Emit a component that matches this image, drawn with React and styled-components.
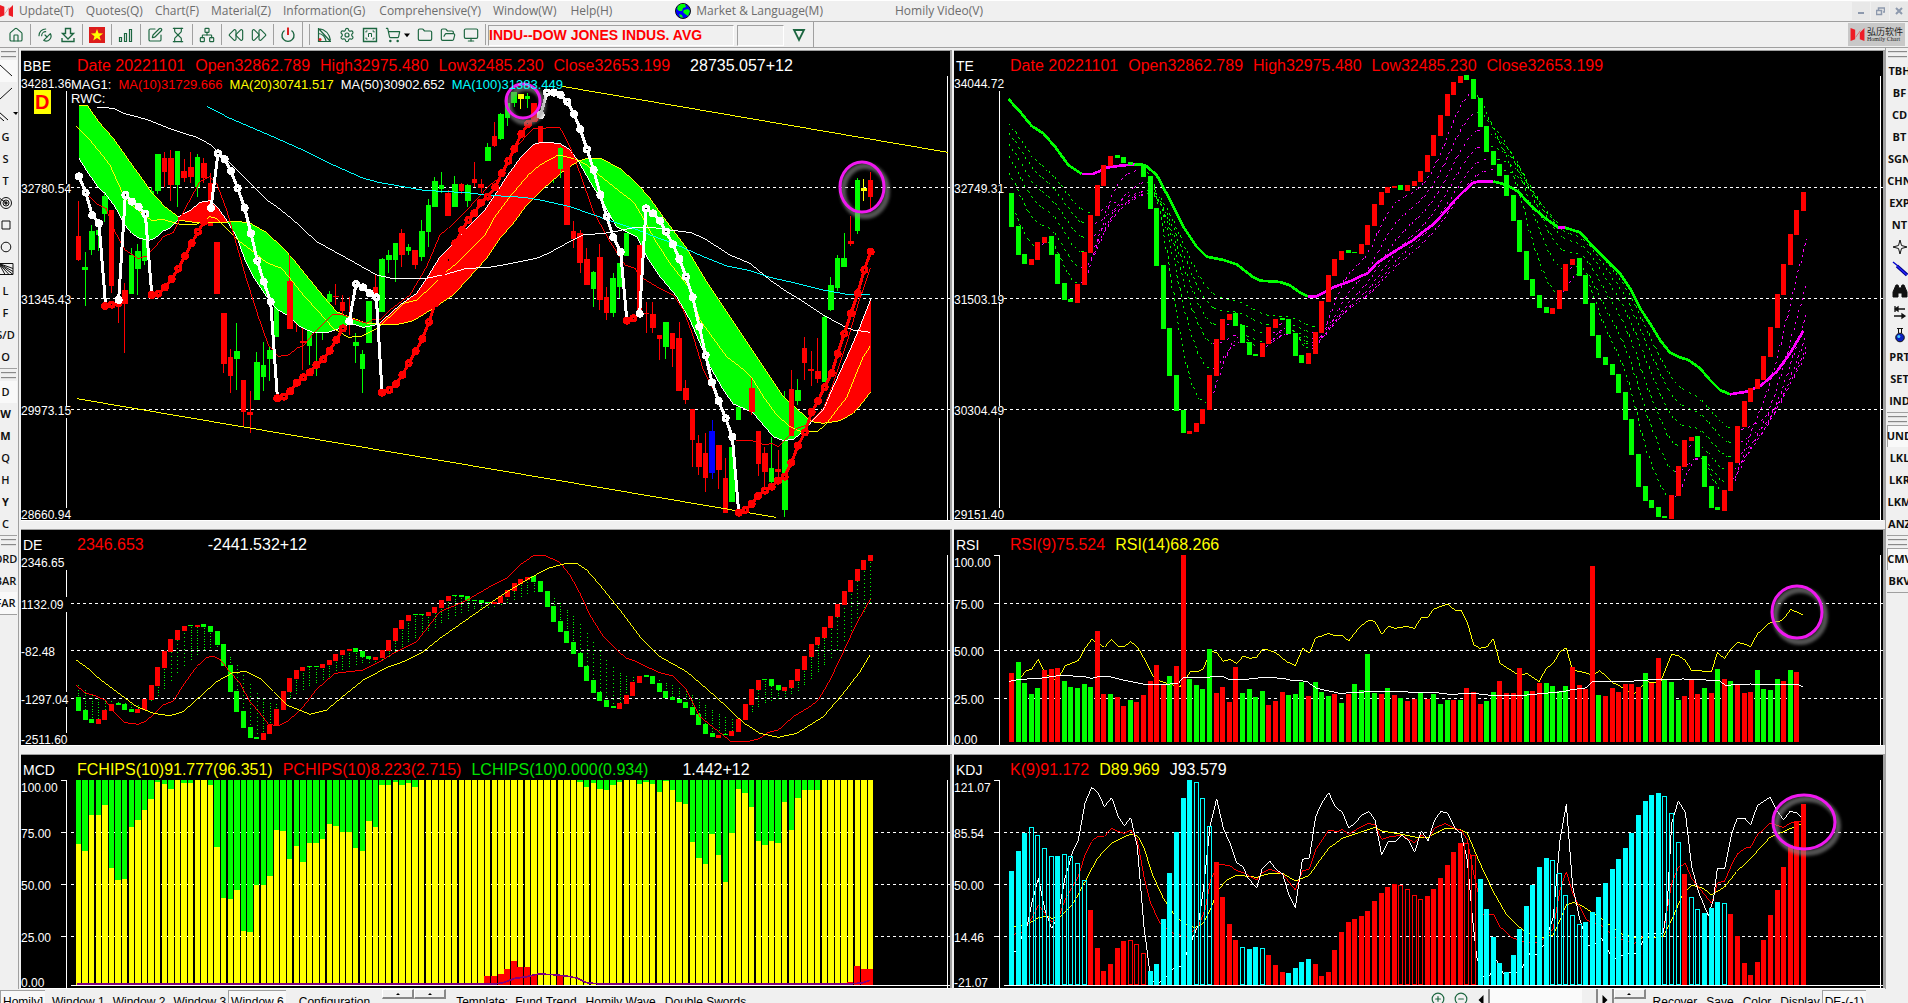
import React from "react";
import styled, { createGlobalStyle, css } from "styled-components";
import {
  House, SatelliteDish, SquarePen, Hourglass, Network, Rewind, FastForward,
  Settings, ShoppingCart, Folder, FolderOpen, Monitor, CirclePlus, CircleMinus,
} from "lucide-react";

/* ---------- palette ---------- */
const RED = "#ff0000";
const GREEN = "#00ff00";
const YELLOW = "#ffff00";
const CYAN = "#00ffff";
const WHITE = "#ffffff";
const MAGENTA = "#ff00ff";
const BLUE = "#0000ff";
const PURPLE = "#800080";
const FACE = "#f0f0f0";
const SHADE = "#a0a0a0";
const ICON = "#1c6640";

/* ---------- series ---------- */
const PITCH = 19.8;
const BODY = 15;
const LEFT_START = 235.5;
const RIGHT_START = 214.5;

const nums = (s) => s.trim().split(/\s+/).map(Number);
const tags = (s) => s.trim().split(/\s+/).map((t) => [t[0], Number(t.slice(1))]);
const join = (a, b, dx) =>
  a.trim() + " " + b.trim().split(/\s+/).map((p) => {
    const [x, y] = p.split(",");
    return `${Number(x) + dx},${y}`;
  }).join(" ");
const L = (a, b) => join(a, b, 1410);
const R = (a, b) => join(a, b, 1470);

// colour, bar index, high, body top, body bottom, low
const candles = `
R 0 452 558 629 632|G 1 606 651 659 768|G 2 525 543 600 615|G 3 540 540 556 603|G 4 430 438 491 515
R 5 480 480 708 728|R 6 746 752 762 820|R 7 698 720 762 908|G 8 595 615 731 731|G 9 583 602 657 735
G 10 555 560 632 645|G 11 410 424 470 480|G 12 312 312 423 432|R 13 305 324 366 412|R 14 300 324 405 452
G 15 303 303 405 470|R 16 328 363 384 395|R 17 306 351 381 398|G 18 312 321 411 440|R 19 324 339 384 400
R 20 370 399 528 528|R 21 576 576 732 732|R 22 789 789 941 970|R 23 898 921 978 1028|G 24 819 903 927 1020
R 25 990 990 1086 1128|R 26 1023 1086 1095 1150|G 27 906 936 1049 1049|G 28 876 945 980 1022|G 29 891 900 927 993
G 30 770 770 860 860|R 31 681 696 720 738|R 32 615 694 837 837|R 33 785 808 820 845|R 34 828 873 879 960
G 35 838 838 888 945|G 36 800 830 835 978|G 37 840 845 848 870|G 38 723 732 756 762|R 39 702 738 742 765
R 40 735 756 782 808|R 41 741 800 815 856|G 42 850 876 888 938|G 43 900 912 957 1028|G 44 752 752 879 879
R 45 672 711 745 760|G 46 624 627 786 786|G 47 600 615 629 668|G 48 578 579 629 695|R 49 537 549 615 651
G 50 582 591 602 614|R 51 600 600 645 657|G 52 510 543 621 633|G 53 447 465 546 590|G 54 381 393 471 471
G 55 366 405 416 430|R 56 420 429 497 497|G 57 378 402 471 471|R 58 399 402 423 432|G 59 402 405 453 471
R 60 336 387 399 410|R 61 388 402 414 430|G 62 280 291 333 333|R 63 216 258 288 291|G 64 190 192 267 270
G 65 130 160 204 228|G 66 126 126 159 170|Y 67 132 132 148 177|G 68 130 138 147 175|R 69 159 159 215 215
R 70 228 228 280 280|G 72 339 366 384 398|G 73 290 294 357 384|R 74 348 348 525 525|R 75 513 543 567 593
R 76 540 549 639 669|R 77 594 627 705 705|G 78 663 666 717 770|R 79 582 621 750 780|R 80 711 741 789 809
G 81 670 684 789 801|G 82 640 640 711 745|G 83 550 550 618 618|R 85 585 585 790 800|R 86 756 790 793 849
R 87 756 792 834 849|R 88 855 855 867 930|G 89 816 816 891 927|R 90 850 850 897 950|R 91 816 864 1023 1023
R 92 990 1014 1050 1063|R 93 1078 1078 1170 1251|R 94 1155 1180 1251 1275|R 95 1149 1209 1284 1326|B 96 1110 1143 1270 1287
R 97 1185 1185 1260 1317|R 98 1224 1284 1389 1389|G 99 1191 1191 1356 1356|G 100 1070 1070 1110 1110|R 102 984 1014 1086 1095
R 103 1143 1143 1242 1278|R 104 1192 1209 1266 1330|G 105 1161 1254 1296 1300|R 106 1200 1256 1266 1300|G 107 1022 1170 1380 1401
R 108 960 1017 1158 1158|G 109 987 1020 1053 1065|R 110 861 894 939 990|R 111 903 958 962 1007|R 112 864 963 987 998
G 113 795 801 996 996|G 114 681 705 780 782|G 115 615 624 714 722|G 116 549 624 651 651|R 117 498 573 581 588
G 118 384 390 543 552|Y 119 387 414 423 453|R 120 366 390 441 480`
  .trim().split(/[|\n]/).map((row) => {
    const [c, ...v] = row.trim().split(" ");
    return [c, ...v.map(Number)];
  });
const candleColour = { R: RED, G: GREEN, Y: YELLOW, B: BLUE };

// each band: fill, edge nearer the fast line, edge nearer the slow line
const bands = [
  { fill: GREEN, slow: "237,168 263,168 300,220 340,265 400,350 440,405 455,428 495,470 535,500",
    fast: "237,325 265,370 297,415 315,430 345,470 375,525 395,550 415,563 445,572 465,565 490,543 510,535 535,510" },
  { fill: RED, slow: "535,510 590,518 640,518 685,516",
    fast: "535,500 570,482 600,457 630,452 655,475 685,518" },
  { fill: GREEN, slow: "685,516 720,515 755,522 800,548 850,595 880,628 930,690 975,745 1010,785 1045,800 1100,820 1140,822",
    fast: "685,520 710,560 735,630 760,680 800,740 830,778 870,800 900,830 940,848 980,848 1020,835 1050,820 1090,832 1140,822" },
  { fill: RED, slow: L("1140,825 1190,824 1240,812 1300,775 1360,735", "0,680 50,625 90,565 130,520 170,465 210,425 250,390 290,355 325,334"),
    fast: L("1140,818 1200,765 1250,730 1280,685 1320,620 1360,580", "0,525 45,480 75,435 110,380 150,325 190,283 215,277 270,280 300,300 325,334") },
  { fill: GREEN, slow: L("1735,334", "350,325 395,327 450,355 500,400 540,445 590,515 650,595 710,695 760,770 820,860 880,950 940,1040 990,1085 1025,1115"),
    fast: L("1735,334", "360,395 400,460 440,530 500,560 530,620 570,680 620,740 660,810 690,880 720,950 760,1020 790,1062 820,1075 850,1090 880,1125 910,1160 940,1172 970,1168 1000,1145 1025,1115") },
  { fill: RED, slow: L("2435,1115", "1060,1120 1110,1112 1150,1090 1180,1055 1202,1025"),
    fast: L("2435,1115", "1060,1080 1090,1010 1140,900 1170,830 1202,748") },
];

const maLines = [
  [YELLOW, L("229,229 270,270 310,320 330,345 350,390 375,445 400,470 440,500 455,511 490,509 540,523 590,523 630,500 650,505 690,545 720,575 760,605 800,638 845,655 870,685 910,735 960,790 1000,835 1045,862 1085,858 1130,836 1170,800 1210,760 1250,750 1300,705 1330,672 1370,640",
    "0,600 45,555 75,500 120,440 175,375 210,345 265,315 320,328 350,345 400,385 450,425 490,455 520,505 555,570 600,640 655,710 690,810 730,865 770,920 810,950 845,982 880,1040 920,1095 960,1130 1000,1148 1045,1143 1070,1120 1100,1080 1130,1043 1155,980 1180,920 1201,888")],
  [RED, L("255,425 290,462 318,475 345,545 375,600 415,626 440,618 470,585 490,560 520,548 540,505 575,440 600,395 630,380 650,400 680,480 700,550 740,690 775,800 805,885 835,919 865,915 895,892 910,888 940,850 1000,792 1030,795 1060,808 1100,820 1120,808 1140,810 1170,780 1230,735 1280,650 1320,555 1345,535 1380,500",
    "0,470 60,405 100,375 130,300 190,235 270,233 300,290 330,370 370,485 420,575 465,645 495,655 510,680 560,710 610,735 640,780 670,860 700,960 740,1040 775,1135 800,1172 850,1173 885,1185 905,1180 925,1190 980,1135 1010,1125 1060,1075 1090,1000 1130,880 1165,760 1201,655")],
  [WHITE, L("290,171 340,175 370,190 440,208 510,236 590,262 630,283 655,305 700,350 740,390 800,450 830,470 880,510 950,575 1050,630 1130,675 1180,686 1280,685 1340,672 1400,655",
    "50,653 100,645 200,625 235,610 290,580 340,555 420,548 490,533 550,533 600,540 665,548 710,570 780,615 840,640 900,690 950,725 1000,755 1060,795 1120,828 1150,840 1201,847")],
  [CYAN, L("620,169 690,205 760,235 830,265 920,305 1000,345 1090,385 1140,398 1210,410 1270,421 1400,428",
    "60,436 160,442 210,450 300,470 400,505 490,535 540,555 610,580 700,620 770,648 840,662 900,682 980,700 1060,720 1130,733 1201,734")],
];

const waves = [
  [RED, "315,768 335,764 355,760"],
  [WHITE, "237,379 257,428 277,496 297,520 316,755"],
  [WHITE, "356,750 376,435 396,455 416,470 436,492 455,730"],
  [RED, "455,735 475,731 495,712 515,687 535,656 555,618 575,580 594,545 612,515"],
  [WHITE, "633,474 654,310 674,328 693,363 713,415 734,474 753,550 772,632 791,695 812,755 832,1040"],
  [RED, "832,1045 852,1040 871,1024 891,998 910,982 930,967 949,945 970,928 989,902 1009,870 1029,835"],
  [WHITE, "1048,814 1068,702 1089,712 1109,730 1129,742 1146,1025"],
  [RED, L("1146,1028 1168,1020 1188,1002 1207,975 1226,940 1247,904 1267,867 1287,816 1306,760 1326,690 1346,630 1366,580 1386,540 1405,510",
    "13,490 33,458 53,440 76,412 95,370 115,333 133,297 154,252 174,222 194,205")],
  [WHITE, L("1622,195", "231,128 252,128 272,135 292,155 312,192 331,238 351,298 371,360 391,435 410,500 430,562 452,606 470,805")],
  [RED, "1880,812 1900,805"],
  [WHITE, L("1919,791", "528,475 549,490 570,512 588,545 609,583 628,627 648,680 668,742 688,830 707,916 726,997 746,1053 767,1105 787,1161 806,1385")],
  [RED, L("2216,1388", "826,1380 845,1362 864,1338 885,1322 905,1310 924,1292 944,1280 964,1238 984,1187 1005,1147 1025,1086 1044,1053 1064,1012 1085,970 1103,911 1123,851 1143,790 1163,730 1183,660 1202,605")],
];

const trend = nums(`432 530 615 642 627 576 561 615 702 750 756 702 606 495 405 345 318 324 339 346 347 381 476 647 836 978
1083 1148 1143 1119 1077 975 867 807 792 828 879 914 918 879 831 807 809 852 918 939 909 846 753 675 627 603 608 609 582 525 462
426 411 408 419 405 393 363 315 255 195 132 96 78 90 147 231 306 345 378 438 513 606 690 738 774 789 774 720 642 627 678 762
858 924 945 975 1029 1110 1215 1311 1353 1374 1401 1404 1335 1248 1170 1161 1221 1311 1374 1380 1320 1236 1128 1053 1014 987
918 831 732 642 552 480 426`);

const trendEdge = [
  [GREEN, "205,147 240,185 275,228 310,250 345,290 385,345 425,372"],
  [MAGENTA, "425,372 460,372 500,353 540,347 585,343"],
  [GREEN, "585,343 615,345 650,375 690,450 730,530 770,590 800,620 850,630 890,643 940,682 960,692 1020,696 1050,706 1080,728 1105,739"],
  [MAGENTA, "1105,739 1130,739 1185,710 1240,690 1285,668 1310,640 1365,603 1420,570 1450,545 1480,523 1520,480 1545,450 1570,425 1600,398 1620,394 1660,394"],
  [GREEN, "1660,394 1700,405 1735,425 1770,465 1810,500 1855,533"],
  [MAGENTA, "1855,533 1875,533"],
  [GREEN, "1875,533 1920,547 1960,590 2000,630 2040,670 2070,715 2100,775 2130,820 2160,870 2190,908 2220,922 2245,930 2280,955 2310,990 2340,1020 2370,1033"],
  [MAGENTA, "2370,1033 2420,1025 2465,1005 2510,965 2550,910 2590,843"],
];
// period, seed
const ribbons = [[5, 485], [9, 352], [13, 300], [17, 262], [21, 230], [25, 203]];

const diff = nums(`534 573 600 609 597 570 552 556 570 575 567 537 495 441 393 357 330 318 319 316 320 336 375 438 516 575 624
654 656 639 615 567 513 474 450 441 442 442 432 420 402 390 388 395 411 416 411 390 360 324 300 285 286 286 276 262 240 228
229 232 242 243 250 250 246 228 210 189 177 171 185 215 261 305 335 369 401 440 482 518 542 560 564 549 525 486 468 472 491
515 534 540 548 563 584 614 641 651 645 646 633 598 551 507 480 481 497 510 501 480 447 408 372 351 321 288 252 213 180 147
120 105`);
const diffLines = [
  [RED, L("229,496 255,518 285,527 315,540 345,580 375,608 415,613 440,602 490,555 520,543 550,495 590,440 620,413 640,408 660,418 685,450 720,490 750,545 780,580 805,612 835,618 865,603 910,560 950,508 1005,460 1090,450 1140,425 1180,400 1250,365 1320,275 1380,250",
    "0,235 60,200 110,175 150,135 190,107 225,106 270,128 300,165 330,220 360,285 400,350 440,390 470,415 500,425 540,445 570,458 610,468 650,510 690,590 740,630 785,666 830,666 870,655 895,637 925,630 970,590 1020,560 1045,540 1080,480 1125,385 1160,310 1201,238")],
  [YELLOW, L("229,420 270,450 300,478 350,515 410,560 460,580 510,587 550,575 600,530 650,485 700,457 740,455 780,475 820,515 860,555 930,583 980,570 1040,520 1090,480 1160,443 1210,425 1270,395 1320,355 1370,320",
    "0,292 60,250 120,210 170,180 215,155 240,143 290,130 320,130 350,150 390,195 450,270 510,350 570,410 650,455 720,515 770,560 820,608 870,640 925,652 980,640 1060,590 1120,520 1170,455 1201,404")],
];

const chips = nums(`972 993 885 885 855 1043 1080 1077 921 900 870 837 786 792 807 780 789 789 780 780 795 981 1134 1137 1109
1233 1236 1095 1095 1068 930 933 1017 978 1026 969 969 957 912 918 936 936 984 993 903 921 795 795 786 795 789 801
780 780 780 780 780 780 780 780 780 780 780 780 780 780 780 780 780 780 780 780 780 780 780 780
786 801 789 807 810 795 786 780 780 792 786 792 816 783 810 846 852 966 1014 1032 941 1005 1086 939 807 819 861 963 975
963 969 846 930 834 810 810 810 780 780 780 780 780 780 780 780`);
const pressure = [[62, 1368], [63, 1368], [64, 1362], [65, 1347], [66, 1323], [67, 1341], [68, 1341], [69, 1365], [73, 1368], [117, 1386], [118, 1338], [119, 1347], [120, 1347]];
const pressureLine = "231,1393 1480,1393 1510,1388 1545,1375 1580,1370 1615,1362 1660,1364 1700,1368 1730,1374 1760,1388 1800,1392 2540,1393 2590,1388 2611,1381";

const volume = tags(`R459 G426 G489 G522 G504 R450 R447 R444 G483 G501 G504 G492 G501 R333 R522 G522 R531 R558 G540 R546 R525
R483 R435 R492 G468 R438 R105 G477 G495 G507 G387 R519 R501 R546 R441 G519 G507 G531 G513 R555 R543 R516 G525 G522 G486 R528
G486 G516 G528 R522 G549 R522 G492 G510 G402 G519 R522 G504 R525 G534 R543 R537 G516 R537 G522 G552 G540 R540 G540 R504 R516
R552 G543 G516 R483 R519 R519 R444 G513 R513 R489 G489 G498 G513 G498 R441 R495 R507 R138 G525 R528 R504 R516 R492 R492 R501
G459 R489 R414 G480 G486 G540 R528 R477 R522 G504 R519 G447 R477 G483 R495 R519 R516 G450 G507 G510 G477 R483 G450 R456`);
const rsiSlow = R("245,470 258,452 275,448 295,418 315,460 345,480 362,462 375,438 415,422 435,385 455,358 475,370 493,382 515,358 535,380 552,380 572,365 592,380 612,415 630,450 645,478 680,490 720,500 735,480 752,454 770,456 790,446 805,410 815,393 832,400 850,424 870,418 890,430 910,408 930,415 950,411 968,388 990,391 1010,400 1040,425 1066,437 1088,385 1108,400 1127,353 1145,348 1166,340 1187,348 1207,346 1226,363 1260,320 1287,300 1305,305 1325,343 1345,319 1365,325 1400,319 1424,325 1444,292 1464,292",
  "10,268 52,252 75,270 93,271 112,308 131,374 150,385 172,380 190,356 210,430 245,452 270,468 290,460 328,485 348,446 370,430 390,395 409,383 427,450 455,456 490,465 510,452 548,488 570,498 610,525 650,485 690,490 725,403 745,407 765,420 785,452 845,454 862,398 884,416 902,387 922,367 945,373 962,380 982,342 1020,308 1045,305 1060,298 1082,268 1118,284");
const volumeAverage = R("208,484 240,478 300,475 360,466 435,470 455,475 475,470 510,470 550,480 625,495 690,492 715,490 730,473 800,473 820,469 850,470 870,480 920,478 970,472 1030,475 1050,480 1100,484 1130,505 1200,520 1290,515 1400,516",
  "10,517 60,523 130,520 200,528 260,528 310,523 400,515 430,508 465,505 487,486 600,484 680,478 760,477 870,482 885,496 960,492 1105,494 1118,500");

// upper case: filled bar, lower case: outlined bar
const momentum = tags(`C1053 C993 C939 c921 c945 c984 c1008 C1008 c1002 c1008 c1029 c1080 R1170 R1284 R1353 R1332 R1284 R1263
r1260 r1272 r1299 C1353 C1332 C1197 C1059 C936 C834 C780 c786 c834 c918 R1026 R1131 R1212 R1260 c1281 C1287 C1281 c1284 R1305
R1335 R1356 C1359 C1344 C1326 C1317 R1332 R1368 R1356 R1290 R1236 R1206 R1197 R1188 R1173 R1143 R1119 R1101 R1092 r1095 r1107
r1125 r1137 R1128 R1107 R1074 R1035 R996 R969 r969 r1005 C1077 C1167 C1251 C1329 C1356 C1305 C1227 C1158 C1095 C1041 C1014
c1020 c1059 c1125 c1185 c1212 C1206 C1176 C1131 C1089 C1047 C1017 C984 C939 C885 C843 C825 C819 c828 c879 c966 R1062 c1131
c1167 C1179 C1164 C1146 c1149 R1182 R1248 R1329 R1365 R1326 R1260 R1185 R1110 R1041 R975 R903 R852`);
const kdjLines = [
  [YELLOW, R("222,1219 260,1215 295,1193 320,1188 335,1195 360,1190 400,1150 435,1085 472,1015 515,970 553,950 575,942 595,950 612,985 640,1070 670,1135 700,1180 730,1210 765,1223 790,1210 812,1165 835,1110 860,1080 890,1065 950,1072 990,1060 1028,1060 1066,1083 1108,1066 1140,1020 1166,985 1207,955 1260,937 1305,922 1325,933 1385,943 1424,951 1464,953",
    "0,948 45,925 90,928 112,940 150,1030 190,1115 230,1185 280,1232 330,1255 370,1245 390,1200 409,1155 430,1147 460,1160 520,1200 570,1240 620,1255 700,1250 725,1200 755,1130 785,1095 820,1105 845,1125 885,1100 920,1055 962,1015 1020,952 1060,935 1118,910")],
  [RED, R("222,1243 250,1235 275,1195 295,1155 315,1180 335,1205 355,1195 375,1140 415,1070 435,1005 455,965 472,949 493,949 515,925 535,935 553,940 572,930 592,960 612,1070 632,1150 660,1210 700,1240 740,1250 775,1220 795,1170 812,1080 835,1032 870,1037 890,1052 910,1058 950,1080 967,1058 990,1048 1028,1062 1066,1110 1087,1053 1108,1048 1127,990 1166,930 1190,935 1207,929 1226,943 1260,922 1287,910 1305,915 1325,958 1350,950 1385,946 1424,968 1444,945 1464,958",
    "14,925 45,910 75,925 95,932 112,960 131,1060 160,1185 190,1182 210,1220 245,1252 280,1265 330,1268 370,1225 390,1110 409,1055 430,1125 470,1200 520,1220 560,1255 615,1270 650,1240 700,1240 725,1090 745,1043 766,1030 785,1075 845,1150 862,1090 884,1083 905,1035 922,1002 945,985 962,981 982,945 1020,910 1060,922 1085,908 1118,905")],
  [WHITE, R("222,1296 232,1290 245,1250 262,1215 275,1150 295,1075 315,1170 335,1225 352,1195 375,1075 400,990 415,960 435,850 455,802 475,820 493,860 515,833 535,890 553,917 572,893 592,980 612,1220 632,1375 650,1395 680,1370 700,1345 722,1340 740,1300 760,1250 775,1215 790,1110 810,920 830,836 850,925 870,970 890,1028 908,1040 925,1075 950,1104 967,1045 990,1024 1010,1050 1028,1062 1045,1120 1066,1164 1087,1018 1108,1014 1127,890 1145,850 1166,818 1187,862 1207,876 1226,924 1245,910 1265,885 1287,875 1305,900 1325,1005 1345,964 1365,966 1385,946 1405,960 1424,997 1444,932 1464,963",
    "14,900 33,874 53,880 75,925 93,940 112,1020 128,1200 140,1310 160,1370 180,1365 200,1320 220,1360 270,1355 300,1300 320,1303 345,1270 370,1190 390,960 409,853 428,1100 450,1200 475,1278 500,1270 515,1255 550,1320 590,1300 620,1300 650,1240 700,1240 712,1150 725,910 745,842 766,878 785,1040 805,1115 835,1187 850,1140 862,1046 884,1045 905,940 922,895 945,895 962,915 982,857 1020,832 1040,870 1060,900 1080,874 1100,878 1118,895")],
];

/* ---------- chart primitives ---------- */
function ema(values, period, seed) {
  const k = 2 / (period + 1);
  let last = seed;
  return values.map((v) => (last += (v - last) * k));
}

const Line = ({ points, colour, width = 3, dash }) => (
  <polyline points={points} fill="none" stroke={colour} strokeWidth={width} strokeDasharray={dash} />
);

const Steps = ({ values, start }) =>
  values.slice(1).map((v, i) => {
    const prev = values[i];
    const up = v < prev;
    const top = Math.min(v, prev) - (up ? 0 : 3);
    return (
      <rect key={i} x={start + i * PITCH - 7.5} y={top} width={BODY}
        height={Math.abs(v - prev) + 3} fill={up ? RED : GREEN} />
    );
  });

function Plot({ x, y, children }) {
  return (
    <g transform={`translate(${x} ${y}) scale(0.333333)`} shapeRendering="crispEdges">
      {children}
    </g>
  );
}

function Scale({ labels, grid, segments, solid, floor, top = 25 }) {
  return (
    <g shapeRendering="crispEdges" stroke={WHITE} strokeWidth="1">
      {grid.map((gy) => (
        <line key={gy} x1="50" x2="100%" y1={gy + 0.5} y2={gy + 0.5} strokeDasharray="3 3" />
      ))}
      {solid && (
        <>
          <line x1="45.5" x2="45.5" y1={top} y2="100%" />
          <line x1="40" x2="46" y1={top + 0.5} y2={top + 0.5} />
          {grid.map((gy) => <line key={gy} x1="40" x2="46" y1={gy + 0.5} y2={gy + 0.5} />)}
        </>
      )}
      {segments && segments.map(([a, b]) => <line key={a} x1="45.5" x2="45.5" y1={a} y2={b} />)}
      {floor && <line x1="50" x2="100%" y1={floor + 0.5} y2={floor + 0.5} />}
      <svg x="100%" overflow="visible">
        <line x1="-2.5" x2="-2.5" y1="25" y2="1000" />
      </svg>
      {labels.map(([text, ly]) => (
        <text key={text} x="0" y={ly} fill={WHITE} stroke="none" fontSize="12">{text}</text>
      ))}
    </g>
  );
}

function Marker({ cx, cy, rx, ry }) {
  return (
    <g fill="none">
      <ellipse cx={cx + 3} cy={cy + 4} rx={rx} ry={ry} stroke="#8c8c8c" strokeOpacity="0.6" strokeWidth="6" filter="url(#soft)" />
      <ellipse cx={cx} cy={cy} rx={rx} ry={ry} stroke="#f018f0" strokeWidth="3" />
    </g>
  );
}

/* ---------- styled parts ---------- */
const GlobalStyle = createGlobalStyle`
  * { box-sizing: border-box; }
  html, body, #root { height: 100%; }
  body { margin: 0; overflow: hidden; background: ${FACE}; font-family: "Liberation Sans", Arial, sans-serif; }
  button, input, select { font: inherit; color: inherit; }
`;

const Page = styled.div`
  height: 100%;
  display: grid;
  grid-template-rows: 22px 26px minmax(0, 1fr) 14px;
`;

const MenuBar = styled.nav`
  display: flex;
  align-items: center;
  background: ${FACE};
  border-top: 1px solid #fff;
  border-bottom: 1px solid ${SHADE};
  font: 12px/18px "Open Sans", "Noto Sans", sans-serif;
  color: #6d6d6d;
  overflow: hidden;
`;

const MenuItem = styled.button`
  display: flex;
  align-items: center;
  gap: 5px;
  border: 0;
  background: none;
  padding: 0 6px;
  margin-left: ${(p) => p.$lead || 0}px;
  white-space: nowrap;
`;

const WindowButtons = styled.div`
  display: flex;
  gap: 1px;
  margin-left: auto;
`;

const WindowButton = styled.button`
  width: 18px;
  height: 18px;
  padding: 0;
  border: 0;
  background: #e8e8e8;
  display: grid;
  place-items: center;
`;

const ToolBar = styled.div`
  display: flex;
  align-items: stretch;
  background: ${FACE};
  border-bottom: 1px solid ${SHADE};
  padding-left: 2px;
`;

const Divider = styled.span`
  width: 1px;
  margin: ${(p) => (p.$full ? "0" : "2px 0")};
  background: ${SHADE};
  flex: none;
`;

const ToolGroup = styled.div`
  display: flex;
  align-items: center;
  padding: 0 3px 0 2px;
`;

const ToolButton = styled.button`
  width: ${(p) => (p.$wide ? 32 : 23)}px;
  height: 22px;
  padding: 0;
  border: 0;
  background: none;
  display: flex;
  align-items: center;
  justify-content: center;
  gap: 3px;
  color: ${ICON};
`;

const SymbolField = styled.input`
  width: ${(p) => p.$width}px;
  height: 21px;
  margin: 1px 3px 0 0;
  padding: 0;
  border: 1px solid ${SHADE};
  border-right-color: #fff;
  border-bottom-color: #fff;
  border-radius: 0;
  background: ${FACE};
  outline: none;
  && {
    font: bold 14px "Liberation Sans", Arial, sans-serif;
    color: ${RED};
  }
`;

const Brand = styled.div`
  margin: 1px 3px 1px auto;
  width: 57px;
  background: #c8c8c8;
  display: flex;
  align-items: center;
  gap: 2px;
  padding-left: 2px;
  font: 9px/9px "Noto Sans CJK SC", sans-serif;
  color: #222;
`;

const BrandName = styled.span`
  display: grid;
  white-space: nowrap;
  small { font: 6px/6px "Liberation Serif", serif; }
`;

const Workspace = styled.div`
  display: grid;
  grid-template-columns: 21px minmax(0, 1fr) 25px;
  min-height: 0;
`;

const SideBar = styled.aside`
  overflow: hidden;
  display: flex;
  flex-direction: column;
  align-items: ${(p) => (p.$side === "left" ? "flex-end" : "flex-start")};
  ${(p) => p.$side === "left"
    ? css`border-right: 1px solid ${SHADE}; margin-right: 2px; padding-right: 1px;`
    : css`border-left: 1px solid ${SHADE}; margin-left: 2px; padding-left: 1px;`}
`;

const Grip = styled.span`
  align-self: stretch;
  height: 7px;
  flex: none;
  margin: 3px 1px 2px;
  border-top: 2px groove #ddd;
  border-bottom: 2px groove #ddd;
`;

const SideGroup = styled.div`
  display: flex;
  flex-direction: column;
  align-items: inherit;
  border-bottom: 1px solid ${SHADE};
  align-self: stretch;
`;

const SideButton = styled.button`
  width: ${(p) => (p.$edge ? 25 : 23)}px;
  height: 22px;
  flex: none;
  padding: 0;
  border: 0;
  display: grid;
  place-items: center;
  justify-content: center;
  background: ${(p) => (p.$on ? "#f9f9f9" : "none")};
  box-shadow: ${(p) => (p.$on && p.$edge ? `inset 1px 1px ${SHADE}` : "none")};
  && {
    font: ${(p) => (p.$bold ? 700 : 600)} 11px/22px "Open Sans", "Noto Sans", sans-serif;
    color: #111;
  }
`;

const Charts = styled.main`
  display: grid;
  grid-template-columns: repeat(2, minmax(0, 1fr));
  grid-template-rows: minmax(0, 470fr) minmax(0, 216fr) minmax(0, 234fr);
  gap: 9px 4px;
  padding: 2px 0 1px;
  min-height: 0;
  border-bottom: 1px solid ${SHADE};
  margin-bottom: -1px;
`;

const Panel = styled.section`
  display: grid;
  grid-template: minmax(0, 1fr) / minmax(0, 1fr);
  background: #000;
  border-top: 1px solid ${SHADE};
  box-shadow: 0 1px #fff, 2px 0 ${SHADE};
  overflow: hidden;
`;

const Canvas = styled.svg`
  grid-area: 1 / 1;
  width: 100%;
  height: 100%;
  font-family: "Liberation Sans", Arial, sans-serif;
`;

const Legend = styled.header`
  grid-area: 1 / 1;
  align-self: start;
`;

const LegendRow = styled.div`
  display: flex;
  align-items: center;
  gap: 10px;
  height: 27px;
  padding-top: 3px;
  font-size: 16px;
  line-height: 24px;
  white-space: nowrap;
`;

const AverageRow = styled.div`
  display: flex;
  gap: 7px;
  padding-left: 50px;
  font-size: 13px;
  line-height: 14px;
  color: #fff;
  white-space: nowrap;
`;

const PanelName = styled.h2`
  margin: 0;
  width: 46px;
  padding-left: 2px;
  font-size: 14px;
  font-weight: 400;
  color: #fff;
`;

const Reading = styled.span`
  color: ${(p) => p.$colour};
  margin-left: ${(p) => p.$lead || 0}px;
`;

const StatusBar = styled.footer`
  display: flex;
  align-items: flex-start;
  overflow: hidden;
  padding-right: 42px;
  font-size: 12px;
  line-height: 16px;
  color: #000;
  background: ${FACE};
`;

const StatusButton = styled.button`
  border: 0;
  border-top: 1px solid ${(p) => (p.$boxed ? SHADE : "transparent")};
  border-left: 1px solid ${(p) => (p.$boxed ? SHADE : "transparent")};
  background: ${(p) => (p.$boxed ? "#f8f8f8" : "none")};
  padding: 3px 2px 0;
  margin: 1px 0 0 ${(p) => p.$lead || 0}px;
  white-space: nowrap;
  line-height: 16px;
`;

const StatusText = styled.span`
  padding: 5px 0 0;
  margin-left: ${(p) => p.$lead || 0}px;
`;

const Spin = styled.button`
  width: 32px;
  height: 10px;
  flex: none;
  margin-left: ${(p) => p.$lead || 0}px;
  padding: 0;
  border: 1px solid #fff;
  border-right: 2px solid #888;
  border-bottom: 2px solid #888;
  background: ${FACE};
  display: grid;
  place-items: center;
`;

const ZoomTools = styled.div`
  display: flex;
  gap: 9px;
  margin-left: auto;
`;

const RoundButton = styled.button`
  border: 0;
  background: none;
  padding: 3px 0 0;
  color: ${ICON};
  line-height: 0;
`;

const ScrollTrack = styled.div`
  width: 140px;
  height: 20px;
  flex: none;
  display: flex;
  justify-content: space-between;
  background: #fafafa;
  margin-left: 6px;
`;

const ScrollPart = styled.button`
  width: 16px;
  padding: 2px 0 0;
  border: 0;
  border-right: 2px solid #888;
  background: ${FACE};
  margin-left: ${(p) => (p.$push ? "auto" : 0)};
  line-height: 0;
`;

/* ---------- small drawings ---------- */
const Logo = ({ w = 15, h = 14 }) => (
  <svg width={w} height={h} viewBox="0 0 15 14" fill="#ee1c25" aria-hidden="true">
    <path d="M0 0 5 2v10L0 14z" /><path d="M15 0v14l-5-2V5z" /><path d="M5 11 10 4l1-2-5 7z" />
  </svg>
);
const Globe = () => (
  <svg width="16" height="16" viewBox="0 0 16 16" aria-hidden="true">
    <circle cx="8" cy="8" r="7.5" fill="#0000ff" stroke="#111" />
    <path d="M3 3l3-2 4 0 1 3-3 1-1 3-3 0-2-2zM9 7l4-1 2 2-2 5-3-2-2-2zM4 11l3 1 1 3-3-1z" fill={GREEN} />
  </svg>
);
const Icon = ({ children, s = 16 }) => (
  <svg width={s} height={s} viewBox="0 0 16 16" fill="none" stroke="currentColor" strokeWidth="1.4" aria-hidden="true">{children}</svg>
);
const Triangle = ({ d, size = 8 }) => (
  <svg width={size} height={size} viewBox="0 0 8 8" aria-hidden="true"><path d={d} fill="#000" /></svg>
);
const ic = { size: 16, strokeWidth: 1.75, "aria-hidden": true };

const toolGroups = [
  [["Home", <House {...ic} />]],
  [["Receive data", <SatelliteDish {...ic} style={{ transform: "scaleX(-1)" }} />],
    ["Download", <Icon><path d="M5.500 1.500h5v5h3L8 12 2.500 6.500h3zM2 11v3.500h12V11" /></Icon>]],
  [["Favourite", <svg width="16" height="16" viewBox="0 0 16 16" aria-hidden="true"><path d="M0 0h16v16H0z" fill="#dd1c1c" /><path d="m8 2 1.600 4.300 4.500.1-3.600 2.800 1.300 4.400L8 11l-3.800 2.600 1.300-4.400L1.900 6.400l4.500-.1z" fill="#ffff00" /></svg>]],
  [["Volume", <Icon><path d="M1.500 10.500h2v4h-2zM6.500 6.500h2v8h-2zM11.500 2.500h2v12h-2z" strokeWidth="1.200" /></Icon>]],
  [["Edit", <SquarePen {...ic} />], ["History", <Hourglass {...ic} />]],
  [["Sectors", <Network {...ic} />]],
  [["Back", <Rewind {...ic} />], ["Forward", <FastForward {...ic} />]],
  [["Exit", <Icon><path d="M4.500 3.500a6 6 0 1 0 7 0" /><path d="M8 .5V8" stroke="#d22" strokeWidth="2" /></Icon>]],
];
const toolTail = [
  ["Scan", <Icon><path d="M2.500 1v13.500H15M2.500 1.500c7 1 11 6 12 12M2.500 6.500c4 0 7 4 7.500 7.500M3 2l11 12" strokeWidth="1.200" /><circle cx="4" cy="12.500" r="1.500" fill="#d22" stroke="none" /></Icon>],
  ["Settings", <Settings {...ic} />],
  ["Frame", <Icon><path d="M1.500 1.500h13v13h-13z" /><path d="M4 5.500V4h1.500M10.500 4H12v1.500M4 10.500V12h1.500M10.500 12H12v-1.500M6.500 10V6.500h3V10" strokeWidth="1" /></Icon>],
  ["Cart", <><ShoppingCart {...ic} /><Triangle size={6} d="M0 2h8L4 7z" /></>],
  ["Folder", <Folder {...ic} />],
  ["Open", <FolderOpen {...ic} />],
  ["Screen", <Monitor {...ic} />],
];

const menu = [["Update(T)"], ["Quotes(Q)"], ["Chart(F)"], ["Material(Z)"], ["Information(G)"], ["Comprehensive(Y)", 2], ["Window(W)"], ["Help(H)", 2]];

const leftTools = [
  ["Line", <Icon><path d="M2 2 14 13" strokeWidth="1" /></Icon>, true],
  ["Ray", <Icon><path d="M2 14 14 3" strokeWidth="1" /></Icon>],
  ["Parallel", <svg width="24" height="12" aria-hidden="true"><path d="M5 3l9 8M2 5l8 7" stroke="#000" /><path d="M19 3h5l-2 3z" /></svg>],
  ["G"], ["S"], ["T"],
  ["Spiral", <Icon><circle cx="8" cy="8" r="5.500" strokeWidth="1" /><circle cx="8" cy="8" r="3" strokeWidth="1" /><circle cx="8" cy="8" r="1" /><path d="M0 2l8 6" strokeWidth="1" /></Icon>],
  ["Box", <Icon><path d="M4 4h8v8H4z" strokeWidth="1" /></Icon>],
  ["Circle", <Icon><circle cx="8" cy="8" r="4.800" strokeWidth="1" /></Icon>],
  ["Fan", <Icon><path d="M1 2.500h14v11H1zM1 2.500l14 11M1 2.500l14 5M1 2.500l6 11M1 2.500l10 11M1 2.500l14 8" strokeWidth="1" /></Icon>],
  ["L"], ["F"], ["S/D"], ["O"],
];
const periods = ["D", "W", "M", "Q", "H", "Y", "C"];
const rightTools = [
  ["TBH"], ["BF"], ["CD"], ["BT"], ["SGN"], ["CHN"], ["EXP"], ["NT"],
  ["Star", <Icon><path d="M8 1l1.500 5.500L15 8 9.500 9.500 8 15 6.500 9.500 1 8l5.500-1.500z" strokeWidth="1" /></Icon>],
  ["Pen", <Icon><path d="M1 1l5 4" strokeWidth="1.500" stroke="#00c" /><path d="M5 5l10 9" strokeWidth="3.500" stroke="#000080" /><path d="M5 5l10 9" strokeWidth="1.500" stroke="#22f" /></Icon>],
  ["Find", <Icon><path d="M4 2h2l1 3h2l1-3h2l3 7v5h-5v-4H6v4H1V9z" fill="#111" strokeWidth="1" /></Icon>],
  ["Shift", <Icon><path d="M3 1v6M3 4h10M3 4l3-2v4zM2 11h11M13 11l-3-2v4z" fill="#111" strokeWidth="1.300" /></Icon>],
  ["Flask", <Icon><path d="M5 1.500h6M6.500 1.500V6M9.500 1.500V6" strokeWidth="1" /><circle cx="8" cy="10.500" r="4.300" fill="#0a20c0" strokeWidth="1" /><circle cx="6.800" cy="9.500" r="1.500" fill="#4cf" stroke="none" /></Icon>],
  ["PRT"], ["SET"], ["IND"],
];

const Side = ({ items, edge }) => items.map(([name, drawing, on]) => (
  <SideButton key={name} type="button" aria-label={name} $on={on} $edge={edge} $bold={edge}>{drawing || name}</SideButton>
));

const price = [[RED, "Date 20221101"], [RED, "Open32862.789"], [RED, "High32975.480"], [RED, "Low32485.230"], [RED, "Close32653.199"]];

function ChartPanel({ name, readings, rows, children }) {
  return (
    <Panel aria-label={name}>
      <Canvas>{children}</Canvas>
      <Legend>
        <LegendRow>
          <PanelName>{name}</PanelName>
          {readings.map(([colour, text, lead]) => (
            <Reading key={text} $colour={colour} $lead={lead}>{text}</Reading>
          ))}
        </LegendRow>
        {rows}
      </Legend>
    </Panel>
  );
}

const Candle = ({ row: [c, i, hi, top, bottom, lo] }) => (
  <g fill={candleColour[c]}>
    <rect x={LEFT_START + i * PITCH - 1.5} y={hi} width="3" height={lo - hi} />
    <rect x={LEFT_START + i * PITCH - 8} y={top} width={BODY + 2} height={bottom - top} />
  </g>
);

/* ---------- panels ---------- */
function PricePanel() {
  return (
    <ChartPanel
      name="BBE"
      readings={[...price, [WHITE, "28735.057+12", 10]]}
      rows={
        <>
          <AverageRow>
            <Reading $colour={WHITE}>MAG1:</Reading>
            <Reading $colour={RED}>MA(10)31729.666</Reading>
            <Reading $colour={YELLOW}>MA(20)30741.517</Reading>
            <Reading $colour={WHITE}>MA(50)30902.652</Reading>
            <Reading $colour={CYAN}>MA(100)31383.449</Reading>
          </AverageRow>
          <AverageRow>RWC:</AverageRow>
        </>
      }
    >
      <defs>
        <filter id="soft" x="-20%" y="-20%" width="140%" height="140%"><feGaussianBlur stdDeviation="1.5" /></filter>
      </defs>
      <Scale grid={[136, 247, 358]} segments={[[40, 133], [140, 244], [251, 355], [367, 457]]}
        labels={[["34281.36", 37], ["32780.54", 142], ["31345.43", 253], ["29973.15", 364], ["28660.94", 468]]} />
      <rect x="13" y="39" width="17" height="24" fill={YELLOW} />
      <text x="14" y="58" fontSize="20" fontWeight="700" fill={RED}>D</text>
      <Plot x={-21} y={-1}>
        {candles.map((row) => <Candle key={row[1]} row={row} />)}
        {bands.map((b) => (
          <g key={b.slow}>
            <polygon fill={b.fill} points={`${b.slow} ${b.fast.split(" ").reverse().join(" ")}`} />
            <Line points={b.slow} colour={YELLOW} />
            <Line points={b.fast} colour={WHITE} />
          </g>
        ))}
        {candles.filter(([, i]) => [32, 73, 74, 85, 102, 108].includes(i)).map((row) => <Candle key={row[1]} row={row} />)}
        {maLines.map(([colour, points]) => <Line key={colour} points={points} colour={colour} />)}
        <Line points="231,1046 2327,1402" colour={YELLOW} />
        <Line points="1686,109 2843,307" colour={YELLOW} />
        {waves.map(([colour, points]) => (
          <g key={points}>
            <Line points={points} colour={colour} width={9} />
            {points.split(" ").slice(0, colour === WHITE ? -1 : undefined).map((p, i) => {
              const [x, y] = p.split(",");
              return (
                <g key={p}>
                  <circle cx={x} cy={y} r="12" fill={colour} />
                  {i % 3 === 1 && <circle cx={x} cy={y} r="2" fill="#000" />}
                </g>
              );
            })}
          </g>
        ))}
      </Plot>
      <Marker cx={502} cy={50} rx={17} ry={17} />
      <Marker cx={841} cy={136} rx={22} ry={25} />
    </ChartPanel>
  );
}

function TrendPanel() {
  return (
    <ChartPanel name="TE" readings={price}>
      <Scale grid={[136, 247, 358]} segments={[[40, 133], [140, 244], [251, 355], [367, 457]]}
        labels={[["34044.72", 37], ["32749.31", 142], ["31503.19", 253], ["30304.49", 364], ["29151.40", 468]]} />
      <Plot x={-14} y={-1}>
        {ribbons.map(([period, seed]) => {
          const v = ema(trend, period, seed);
          return v.slice(1).map((y, i) => (
            <line key={`${period}-${i}`} x1={RIGHT_START + (i - 1) * PITCH + 12} y1={v[i]} x2={RIGHT_START + i * PITCH + 8} y2={y}
              stroke={y > v[i] ? GREEN : MAGENTA} strokeWidth="3" strokeDasharray="7 11" />
          ));
        })}
        {trendEdge.map(([colour, points]) => <Line key={points} points={points} colour={colour} width={8} />)}
        <Steps values={trend} start={RIGHT_START} />
      </Plot>
    </ChartPanel>
  );
}

function DiffPanel() {
  const average = ema(diff, 12, 470);
  return (
    <ChartPanel name="DE" readings={[[RED, "2346.653"], [WHITE, "-2441.532+12", 54]]}>
      <Scale grid={[73, 120, 168]} segments={[[40, 67], [82, 162], [177, 203]]}
        labels={[["2346.65", 37], ["1132.09", 79], ["-82.48", 126], ["-1297.04", 174], ["-2511.60", 214]]} />
      <Plot x={-21} y={-10}>
        {average.slice(1).map((a, i) => (
          <line key={i} x1={LEFT_START + i * PITCH + 1.5} x2={LEFT_START + i * PITCH + 1.5} y1={a} y2={diff[i + 1]}
            stroke={GREEN} strokeWidth="3" strokeDasharray={Math.abs(a - diff[i + 1]) > 120 ? "3 9" : "3 5"} />
        ))}
        <Steps values={diff} start={LEFT_START} />
        {diffLines.map(([colour, points]) => <Line key={colour} points={points} colour={colour} />)}
      </Plot>
    </ChartPanel>
  );
}

function ChipsPanel() {
  return (
    <ChartPanel
      name="MCD"
      readings={[[YELLOW, "FCHIPS(10)91.777(96.351)"], [RED, "PCHIPS(10)8.223(2.715)"], ["#00e000", "LCHIPS(10)0.000(0.934)"], [WHITE, "1.442+12", 24]]}
    >
      <Scale grid={[77, 129, 181]} solid floor={230}
        labels={[["100.00", 37], ["75.00", 83], ["50.00", 135], ["25.00", 187], ["0.00", 232]]} />
      <Plot x={-21} y={-235}>
        {chips.map((y, i) => (
          <g key={i}>
            {y > 780 && <rect x={LEFT_START + i * PITCH - 8} y="780" width="16" height={y - 780} fill={GREEN} />}
            <rect x={LEFT_START + i * PITCH - 8} y={y} width="16" height={1395 - y} fill={YELLOW} />
          </g>
        ))}
        {pressure.map(([i, y]) => (
          <rect key={i} x={LEFT_START + i * PITCH - 10} y={y} width="18" height={1395 - y} fill={RED} />
        ))}
        <Line points={pressureLine} colour={PURPLE} width={5} />
      </Plot>
    </ChartPanel>
  );
}

function StrengthPanel() {
  return (
    <ChartPanel name="RSI" readings={[[RED, "RSI(9)75.524"], [YELLOW, "RSI(14)68.266"]]}>
      <Scale grid={[73, 120, 168]} solid
        labels={[["100.00", 37], ["75.00", 79], ["50.00", 126], ["25.00", 174], ["0.00", 214]]} />
      <Plot x={-14} y={-10}>
        <Line points={rsiSlow} colour={YELLOW} />
        {volume.map(([c, y], i) => (
          <rect key={i} x={RIGHT_START + i * PITCH - 7.5} y={y} width={BODY} height={665 - y} fill={c === "R" ? RED : GREEN} />
        ))}
        <Line points={volumeAverage} colour={WHITE} />
      </Plot>
      <Marker cx={843} cy={82} rx={25} ry={26} />
    </ChartPanel>
  );
}

function StochasticPanel() {
  return (
    <ChartPanel name="KDJ" readings={[[RED, "K(9)91.172"], [YELLOW, "D89.969"], [WHITE, "J93.579"]]}>
      <Scale grid={[77, 129, 181]} solid floor={230}
        labels={[["121.07", 37], ["85.54", 83], ["50.00", 135], ["14.46", 187], ["-21.07", 232]]} />
      <Plot x={-14} y={-235}>
        {kdjLines.map(([colour, points]) => <Line key={colour} points={points} colour={colour} />)}
        {momentum.map(([c, y], i) => {
          const colour = c.toUpperCase() === "R" ? RED : CYAN;
          const x = RIGHT_START + i * PITCH - 7.5;
          return c === c.toUpperCase()
            ? <rect key={i} x={x} y={y} width={BODY} height={1395 - y} fill={colour} />
            : <rect key={i} x={x + 1.5} y={y + 1.5} width={BODY - 3} height={1392 - y} fill="none" stroke={colour} strokeWidth="3" />;
        })}
      </Plot>
      <Marker cx={850} cy={67} rx={31} ry={27} />
    </ChartPanel>
  );
}

/* ---------- page ---------- */
export default function App() {
  return (
    <Page>
      <GlobalStyle />
      <MenuBar>
        <Logo w={13} h={14} />
        {menu.map(([text, lead]) => <MenuItem key={text} type="button" $lead={lead}>{text}</MenuItem>)}
        <MenuItem type="button" $lead={51}><Globe />Market &amp; Language(M)</MenuItem>
        <MenuItem type="button" $lead={60}>Homily Video(V)</MenuItem>
        <WindowButtons>
          <WindowButton type="button" aria-label="Minimize"><svg width="8" height="8"><path d="M1 5h6v2H1z" fill="#8d99ad" /></svg></WindowButton>
          <WindowButton type="button" aria-label="Restore"><svg width="9" height="9" fill="none" stroke="#8d99ad"><path d="M2.500 3V1h6v4H7M.5 3.500h5v4h-5z" strokeWidth="1.500" /></svg></WindowButton>
          <WindowButton type="button" aria-label="Close"><svg width="8" height="8"><path d="M1 1l6 6M7 1 1 7" stroke="#8d99ad" strokeWidth="2" /></svg></WindowButton>
        </WindowButtons>
      </MenuBar>

      <ToolBar>
        {toolGroups.map((group, i) => (
          <React.Fragment key={group[0][0]}>
            {i > 0 && <Divider />}
            <ToolGroup>
              {group.map(([name, drawing]) => <ToolButton key={name} type="button" aria-label={name}>{drawing}</ToolButton>)}
            </ToolGroup>
          </React.Fragment>
        ))}
        <Divider $full />
        <ToolGroup><Divider $full /></ToolGroup>
        <Divider />
        <ToolGroup>
          {toolTail.map(([name, drawing]) => (
            <ToolButton key={name} type="button" aria-label={name} $wide={name === "Cart"}>{drawing}</ToolButton>
          ))}
        </ToolGroup>
        <Divider />
        <ToolGroup>
          <SymbolField $width={246} aria-label="Symbol" defaultValue="INDU--DOW JONES INDUS. AVG" />
          <SymbolField $width={47} aria-label="Code" defaultValue="" />
          <ToolButton type="button" aria-label="Choose symbol">
            <Icon><path d="M3 3h10L8 13z" strokeWidth="1.800" /></Icon>
          </ToolButton>
        </ToolGroup>
        <Divider $full />
        <Brand>
          <Logo w={15} h={13} />
          <BrandName>弘历软件<small>Homily Chart</small></BrandName>
        </Brand>
      </ToolBar>

      <Workspace>
        <SideBar $side="left">
          <Grip />
          <SideGroup><Side items={leftTools} /></SideGroup>
          <Grip />
          <SideGroup>
            {periods.map((p) => (
              <SideButton key={p} type="button" $on={p === "D"} $bold={"WMY".includes(p)}>{p}</SideButton>
            ))}
          </SideGroup>
          <Grip />
          <SideGroup><Side items={[["ORD"], ["BAR"], ["FAR", null, true]]} /></SideGroup>
        </SideBar>

        <Charts>
          <PricePanel />
          <TrendPanel />
          <DiffPanel />
          <StrengthPanel />
          <ChipsPanel />
          <StochasticPanel />
        </Charts>

        <SideBar $side="right">
          <Grip />
          <SideGroup><Side items={rightTools} edge /></SideGroup>
          <Grip />
          <SideGroup><Side items={[["UND", null, true], ["LKL"], ["LKR"], ["LKM"], ["ANZ"]]} edge /></SideGroup>
          <Grip />
          <SideGroup><Side items={[["CMV", null, true], ["BKV"]]} edge /></SideGroup>
        </SideBar>
      </Workspace>

      <StatusBar>
        <StatusButton type="button" $boxed>Homily]</StatusButton>
        <StatusButton type="button" $lead={4}>Window 1</StatusButton>
        <StatusButton type="button" $lead={3}>Window 2</StatusButton>
        <StatusButton type="button" $lead={3}>Window 3</StatusButton>
        <StatusButton type="button" $boxed>Window 6</StatusButton>
        <StatusButton type="button" $lead={10}>Configuration</StatusButton>
        <Spin type="button" aria-label="Previous" $lead={10}><Triangle size={4} d="M0 6 4 2l4 4z" /></Spin>
        <Spin type="button" aria-label="Next"><Triangle size={4} d="M0 6 4 2l4 4z" /></Spin>
        <StatusText $lead={10}>Template:</StatusText>
        <StatusButton type="button" $lead={4}>Fund Trend</StatusButton>
        <StatusButton type="button" $lead={4}>Homily Wave</StatusButton>
        <StatusButton type="button" $lead={4}>Double Swords</StatusButton>
        <ZoomTools>
          <RoundButton type="button" aria-label="Zoom in"><CirclePlus size={14} /></RoundButton>
          <RoundButton type="button" aria-label="Zoom out"><CircleMinus size={14} /></RoundButton>
        </ZoomTools>
        <ScrollTrack>
          <ScrollPart type="button" aria-label="Scroll left"><Triangle size={10} d="M6 0v8L2 4z" /></ScrollPart>
          <ScrollPart type="button" aria-label="Scroll position" $push />
          <ScrollPart type="button" aria-label="Scroll right"><Triangle size={10} d="M2 0v8l4-4z" /></ScrollPart>
        </ScrollTrack>
        <Spin type="button" aria-label="Step"><Triangle size={4} d="M0 6 4 2l4 4z" /></Spin>
        <StatusButton type="button" $lead={4}>Recover</StatusButton>
        <StatusButton type="button" $lead={4}>Save</StatusButton>
        <StatusButton type="button" $lead={4}>Color</StatusButton>
        <StatusButton type="button" $lead={4}>Display</StatusButton>
        <StatusButton type="button" $boxed>DE-(-1)</StatusButton>
      </StatusBar>
    </Page>
  );
}
